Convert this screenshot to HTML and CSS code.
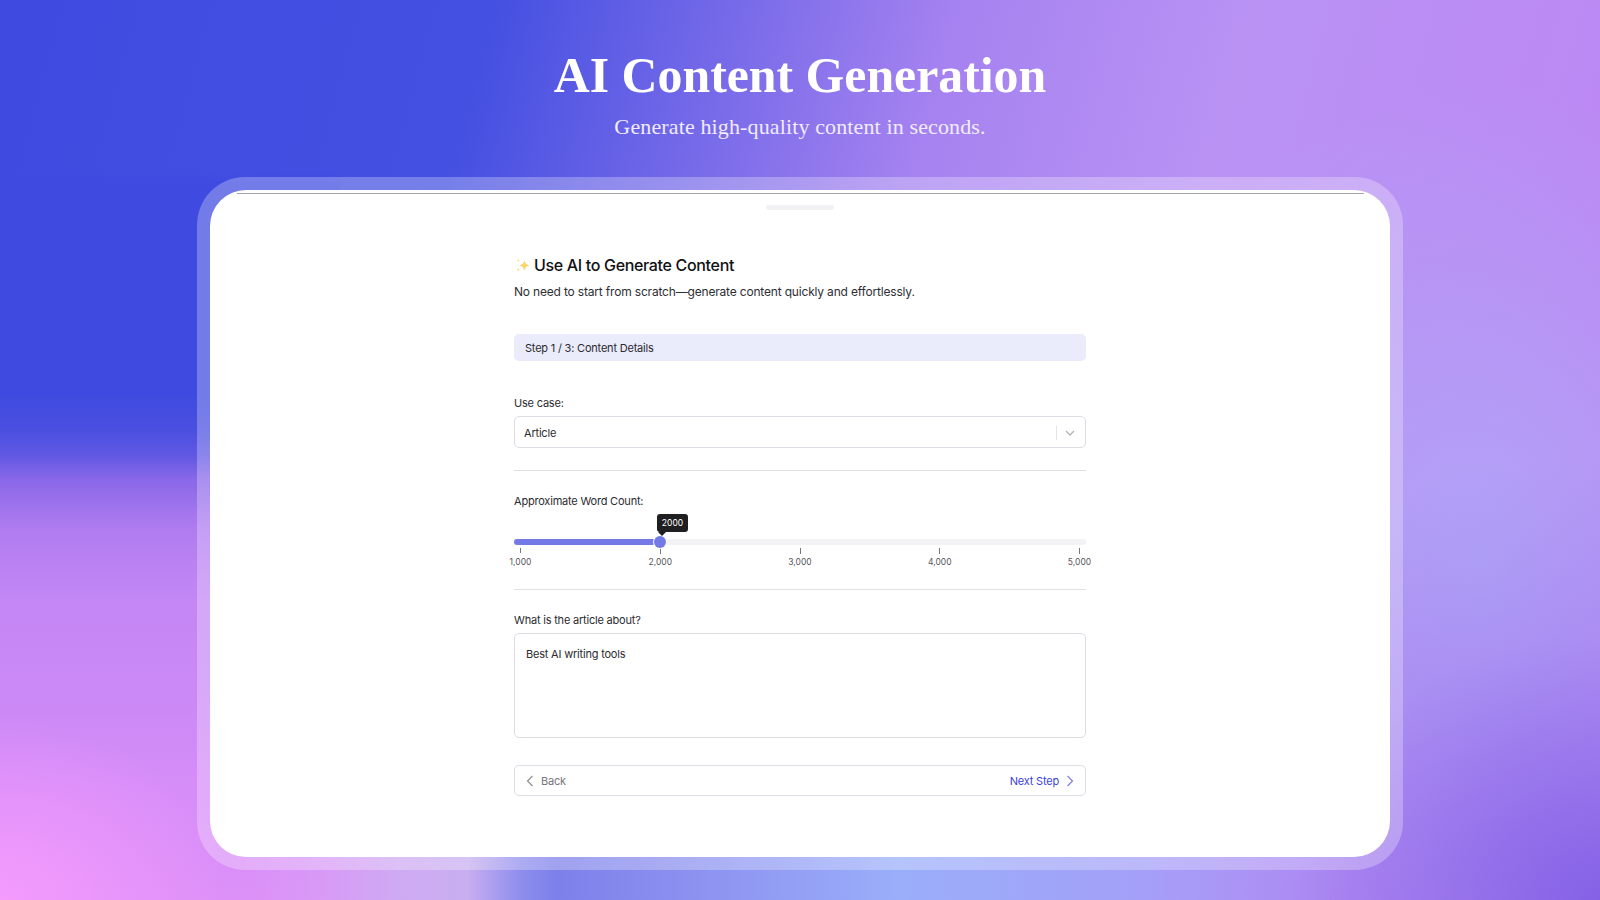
FILE: index.html
```html
<!DOCTYPE html>
<html lang="en">
<head>
    <meta charset="UTF-8">
    <meta name="viewport" content="width=device-width, initial-scale=1.0">
    <title>AI Content Generation</title>
    <link rel="stylesheet" href="styles.css">
</head>
<body>

<!-- header -->
<div class="hero">
    <h1>AI Content Generation</h1>
    <p>Generate high-quality content in seconds.</p>
</div>

<!-- tablet frame -->
<div class="frame">
    <div class="sheet">
        <div class="top-line"></div>
        <div class="handle"></div>

        <div class="form">
            <h2 class="form-title">
                <svg class="sparkle" viewBox="0 0 18 18" width="17" height="17">
                    <path d="M11 3c.7 4 2.100 5.400 6 6-3.900.6-5.300 2-6 6-.7-4-2.100-5.400-6-6 3.900-.6 5.300-2 6-6z" fill="#fbd46a"/>
                    <path d="M4.500 1.500c.2 1.500.8 2.100 2.200 2.300-1.400.2-2 .8-2.200 2.300-.2-1.500-.8-2.100-2.200-2.300 1.400-.2 2-.8 2.200-2.300z" fill="#fde6a3"/>
                    <path d="M4.500 11.500c.2 1.300.7 1.800 1.900 2-1.200.2-1.700.7-1.900 2-.2-1.300-.7-1.800-1.900-2 1.200-.2 1.700-.7 1.900-2z" fill="#fcdc85"/>
                </svg>
                Use AI to Generate Content
            </h2>
            <p class="form-sub">No need to start from scratch—generate content quickly and effortlessly.</p>

            <div class="step">Step 1 / 3: Content Details</div>

            <label class="field-label first">Use case:</label>
            <div class="select">
                <span>Article</span>
                <span class="select-arrow">
                    <svg viewBox="0 0 10 6" width="10" height="6"><path d="M1 1l4 4 4-4" fill="none" stroke="#b4b4b8" stroke-width="1.300"/></svg>
                </span>
            </div>

            <div class="divider"></div>

            <label class="field-label">Approximate Word Count:</label>
            <div class="slider">
                <div class="track"><div class="track-fill"></div></div>
                <div class="thumb"></div>
                <div class="tooltip">2000</div>
            </div>
            <div class="marks">
                <div class="mark tall">1,000</div>
                <div class="mark">2,000</div>
                <div class="mark">3,000</div>
                <div class="mark">4,000</div>
                <div class="mark">5,000</div>
            </div>

            <div class="divider"></div>

            <label class="field-label">What is the article about?</label>
            <div class="textarea">Best AI writing tools</div>

            <div class="nav">
                <a href="#" class="nav-back">
                    <svg viewBox="0 0 8 12" width="8" height="12"><path d="M6.500 1L1.500 6l5 5" fill="none" stroke="#8a8a8f" stroke-width="1.100"/></svg>
                    Back
                </a>
                <a href="#" class="nav-next">
                    Next Step
                    <svg viewBox="0 0 8 12" width="8" height="12"><path d="M1.500 1l5 5-5 5" fill="none" stroke="#7b7bdc" stroke-width="1.100"/></svg>
                </a>
            </div>
        </div>
    </div>
</div>

</body>
</html>
```

FILE: styles.css
```css
/* page */
html, body {
    height: 100%;
}

body {
    margin: 0;
    height: 900px;
    overflow: hidden;
    font-family: Inter, 'Liberation Sans', sans-serif;
    color: #1f1f23;
    background:
        /* pink corner */
        radial-gradient(ellipse 230px 180px at 0 100%, #f49bfd 0%, rgba(244, 155, 253, 0) 100%),
        /* strip below the frame, fades out at both ends */
        linear-gradient(90deg, rgba(216, 154, 246, 0) 0, #d89af6 7%, #cfaaf3 14%, #c8aef0 20%, #8f8eee 24.700%, #7d80ea 28%, #8d92f0 41%, #9aaefa 59%, #a3a0f8 80%, rgba(173, 143, 243, 0) 100%) center bottom / 1108px 50px no-repeat,
        /* left edge, blue into pink */
        linear-gradient(180deg, rgba(63, 75, 224, 0) 0, rgba(63, 75, 224, 0) 170px, #3f4be0 190px, #3f4be0 395px, #4a4fe0 430px, #6058e3 455px, #8a68e8 480px, #b07cf0 530px, #c487f5 600px, #cb89f6 700px, #d68df8 790px, #dc90f8 900px) left top / 340px 100% no-repeat,
        /* right side */
        radial-gradient(ellipse 520px 440px at 100% 100%, #8462e6 0%, rgba(132, 98, 230, 0.6) 30%, rgba(132, 98, 230, 0.2) 60%, rgba(132, 98, 230, 0) 100%),
        radial-gradient(ellipse 360px 480px at 1480px 560px, rgba(176, 166, 247, 0.9) 0%, rgba(176, 166, 247, 0.4) 55%, rgba(176, 166, 247, 0) 100%),
        linear-gradient(105deg, #3f4be0 0%, #4450e1 27%, #a582f0 52%, #b992f4 68%, #bd84f3 100%);
}

/* header */
.hero {
    padding-top: 45.500px;
    height: 131.500px;
    text-align: center;
    color: #fff;
}

.hero h1 {
    margin: 0;
    font-family: 'Liberation Serif', serif;
    font-size: 49.800px;
    font-weight: 700;
    line-height: 60px;
}

.hero p {
    margin: 7.500px 0 0;
    font-family: 'Liberation Serif', serif;
    font-size: 22px;
    line-height: 28px;
    letter-spacing: 0.13px;
    color: #f1ecff;
}

/* frame */
.frame {
    box-sizing: border-box;
    width: 1206px;
    height: 693px;
    margin: 0 auto;
    padding: 13px;
    border-radius: 48px;
    background: rgba(255, 255, 255, 0.27);
}

.sheet {
    position: relative;
    height: 667px;
    border-radius: 36px;
    background: #fff;
}

.top-line {
    position: absolute;
    top: 3px;
    left: 27px;
    right: 26px;
    height: 1px;
    background: #a4a4aa;
}

.handle {
    position: absolute;
    top: 15px;
    left: 556px;
    width: 68px;
    height: 5px;
    border-radius: 3px;
    background: #f2f2f4;
}

/* form */
.form {
    width: 572px;
    margin: 0 auto;
    padding-top: 64px;
}

.form-title {
    display: flex;
    align-items: center;
    gap: 3px;
    margin: 0;
    font-size: 16px;
    font-weight: 500;
    line-height: 22px;
    letter-spacing: -0.33px;
    color: #111114;
}

.sparkle {
    flex: none;
}

.form-sub {
    margin: 7px 0 0;
    font-size: 12px;
    line-height: 18px;
    letter-spacing: -0.18px;
    color: #2e2e33;
}

.step {
    margin-top: 33px;
    padding: 0 11px;
    height: 27px;
    line-height: 28px;
    border-radius: 5px;
    background: #eaebfb;
    font-size: 11px;
    letter-spacing: -0.2px;
    color: #2b2b30;
}

.field-label {
    display: block;
    font-size: 11px;
    line-height: 16px;
    letter-spacing: -0.2px;
    color: #2b2b30;
}

.field-label.first {
    margin-top: 34px;
}

.select {
    display: flex;
    justify-content: space-between;
    align-items: center;
    box-sizing: border-box;
    height: 32px;
    margin-top: 5px;
    padding: 1px 10px 0 9px;
    border: 1px solid #dcdce4;
    border-radius: 5px;
    font-size: 11px;
    letter-spacing: -0.2px;
    color: #2b2b30;
}

.select-arrow {
    display: flex;
    align-items: center;
    height: 14px;
    padding-left: 8px;
    border-left: 1px solid #e4e4e8;
}

.divider {
    height: 1px;
    margin: 22px 0;
    background: #e0e0e4;
}

.marks + .divider {
    margin-top: 21px;
}

/* slider */
.slider {
    position: relative;
    height: 6px;
    margin-top: 30px;
}

.track {
    height: 6px;
    border-radius: 3px;
    background: #f3f3f6;
}

.track-fill {
    width: 146px;
    height: 6px;
    border-radius: 3px;
    background: #737ae6;
}

.thumb {
    position: absolute;
    top: -3px;
    left: 140px;
    box-sizing: border-box;
    width: 12px;
    height: 12px;
    border-radius: 50%;
    background: #737ae6;
    box-shadow: 0 0 0 1px #fff;
}

.tooltip {
    position: absolute;
    top: -25px;
    left: 143px;
    width: 31px;
    height: 18px;
    border-radius: 3px;
    background: #1f1f21;
    color: #fff;
    font-size: 8.500px;
    line-height: 18px;
    text-align: center;
}

.tooltip::after {
    content: "";
    position: absolute;
    left: 1px;
    bottom: -4px;
    border-left: 4px solid transparent;
    border-right: 4px solid transparent;
    border-top: 4px solid #1f1f21;
}

.marks {
    display: flex;
    justify-content: space-between;
    margin: 3px -13.500px 0;
}

.mark {
    width: 40px;
    padding-top: 8px;
    font-size: 8.500px;
    line-height: 12px;
    text-align: center;
    color: #55555b;
    background: linear-gradient(#77777d, #77777d) center top / 1px 6px no-repeat;
}

.mark.tall {
    background-size: 1px 5px;
}

/* prompt */
.textarea {
    box-sizing: border-box;
    height: 105px;
    margin-top: 5px;
    padding: 12px 11px;
    border: 1px solid #dcdce4;
    border-radius: 5px;
    font-size: 11px;
    line-height: 16px;
    letter-spacing: -0.2px;
    color: #2b2b30;
}

.nav {
    display: flex;
    justify-content: space-between;
    align-items: center;
    box-sizing: border-box;
    height: 31px;
    margin-top: 27px;
    padding: 0 11px;
    border: 1px solid #dcdce4;
    border-radius: 5px;
    font-size: 11px;
    letter-spacing: -0.2px;
}

.nav a {
    display: flex;
    align-items: center;
    gap: 7px;
    text-decoration: none;
}

.nav-back {
    color: #77777d;
}

.nav-next {
    color: #3a3fe0;
}
```
